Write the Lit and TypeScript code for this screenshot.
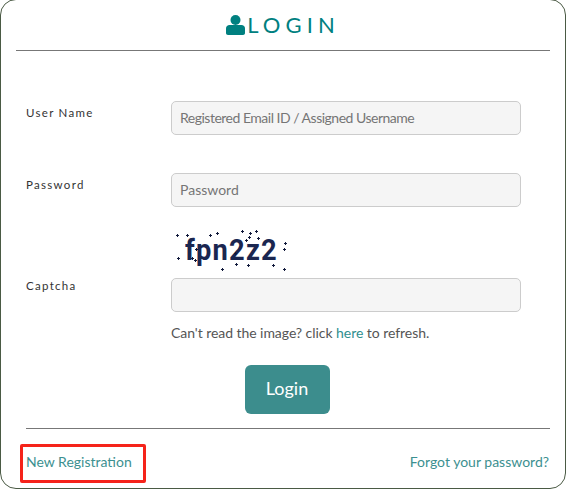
import { LitElement, html, css, svg } from "lit";
import { customElement } from "lit/decorators.js";

const specks: [number, number][] = [
  [177,235],[187,235],[210,235],[217,233],[242,231],[249,237],[246,240],[250,233],[256,231],[258,238],
  [285,243],[284,249],[196,249],[178,258],[195,260],[235,253],[236,264],[248,265],[273,265],[222,269],[284,269],[192,258]
];

@customElement("app-root")
export class AppRoot extends LitElement {
  static styles = css`
    :host { display: block; width: 570px; height: 499px; background: #fff; font-family: Lato, sans-serif; overflow: hidden; position: relative; }
    .card { box-sizing: border-box; width: 566px; height: 490px; margin-top: -1px; border: 1px solid #4a5a44; border-radius: 16px; padding: 0 15px 0 15px; display: flex; flex-direction: column; background: #fff; }
    .head { height: 50px; display: flex; justify-content: center; align-items: flex-end; border-bottom: 1px solid #777; color: #008080; font-size: 22px; letter-spacing: 5.1px; line-height: 26px; }
    .head-in { display: flex; align-items: center; gap: 2px; padding-bottom: 12px; }
    .head svg { width: 19px; height: 20px; display: block; }
    .rows { display: flex; flex-direction: column; padding-left: 10px; }
    .row { display: flex; width: 495px; }
    .label { width: 145px; flex: none; font-size: 11.5px; letter-spacing: 1.3px; color: #333; line-height: 14px; }
    .field { flex: 1; }
    .input { box-sizing: border-box; width: 350px; height: 34px; background: #f5f5f5; border: 1px solid #ccc; border-radius: 5px; padding: 0 8px; font-size: 14px; line-height: 32px; color: #757575; }
    .tight { letter-spacing: -0.5px; }
    .r1 { margin-top: 50px; }
    .r1 .label { padding-top: 5px; }
    .r2 { margin-top: 38px; }
    .r2 .label { padding-top: 5px; }
    .r3 { margin-top: 20px; }
    .r3 .label { padding-top: 52px; }
    .captcha { height: 46px; font-family: Roboto, sans-serif; font-weight: 700; font-size: 29px; letter-spacing: 1.3px; color: #1a2650; line-height: 46px; padding-left: 14px; box-sizing: border-box; margin-bottom: 5px; white-space: nowrap; }
    .captcha span { display: inline-block; transform: scaleX(0.94); transform-origin: left center; }
    .hint { font-size: 14px; line-height: 18px; margin-top: 12px; color: #555; letter-spacing: -0.05px; }
    .hint a { color: #2f8f8f; text-decoration: none; }
    .btn-row { display: flex; justify-content: center; margin-top: 23px; padding-left: 8px; }
    .btn { box-sizing: border-box; width: 85px; height: 49px; padding-bottom: 3px; background: #3c8d8d; border-radius: 6px; color: #fff; font-size: 18px; display: flex; align-items: center; justify-content: center; }
    .rule { margin: 14px 0 0 10px; border-top: 1px solid #777; }
    .foot { display: flex; justify-content: space-between; margin-left: 10px; margin-top: 24px; font-size: 14px; line-height: 18px; color: #3c9090; padding-right: 1px; }
    .mark { position: absolute; left: 20px; top: 444px; width: 126px; height: 39px; box-sizing: border-box; border: 3px solid #f5231a; border-radius: 2px; }
    .specks { position: absolute; left: 0; top: 0; pointer-events: none; }
  `;
  render() {
    return html`
      <div class="card">
        <div class="head"><div class="head-in">
          <svg viewBox="0 0 19 20"><circle cx="9.5" cy="5" r="5" fill="#008080"/><path d="M0 13.5C0 11.5 1.5 10 3.5 10h12c2 0 3.5 1.5 3.5 3.5V18c0 1.2-.8 2-2 2H2c-1.2 0-2-.8-2-2z" fill="#008080"/></svg>
          <span>LOGIN</span>
        </div></div>
        <div class="rows">
          <div class="row r1"><div class="label">User Name</div><div class="field"><div class="input tight">Registered Email ID / Assigned Username</div></div></div>
          <div class="row r2"><div class="label">Password</div><div class="field"><div class="input">Password</div></div></div>
          <div class="row r3"><div class="label">Captcha</div><div class="field">
            <div class="captcha"><span>fpn2z2</span></div>
            <div class="input"></div>
            <div class="hint">Can't read the image? click <a>here</a> to refresh.</div>
          </div></div>
        </div>
        <div class="btn-row"><div class="btn">Login</div></div>
        <div class="rule"></div>
        <div class="foot"><span>New Registration</span><span>Forgot your password?</span></div>
      </div>
      <svg class="specks" width="570" height="499" shape-rendering="crispEdges">${specks.map(([x, y]) => svg`<path d="M${x - 1} ${y + 0.5}h3M${x + 0.5} ${y - 1}v3" stroke="#10183a" stroke-width="1"/>`)}</svg>
      <div class="mark"></div>
    `;
  }
}
